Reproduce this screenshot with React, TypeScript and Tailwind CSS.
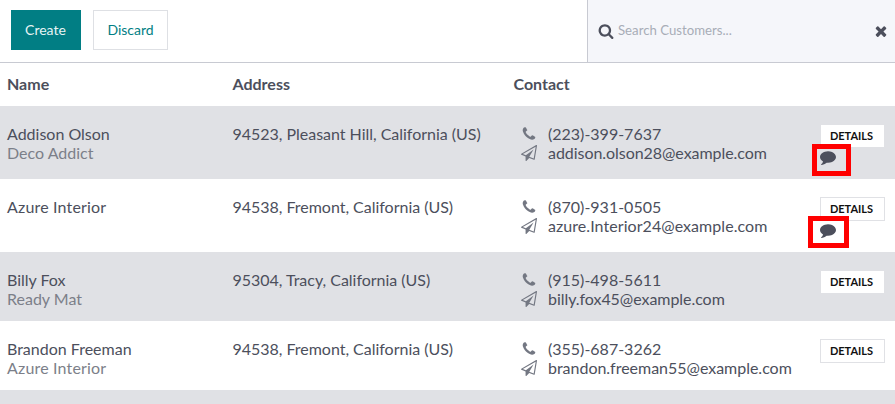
type IconProps = { path: string; className?: string };

const Icon = ({ path, className = "" }: IconProps) => (
  <svg viewBox="0 0 1792 1792" fill="currentColor" className={`size-4 shrink-0 ${className}`} aria-hidden="true">
    <path d={path} />
  </svg>
);

const phone = "M1600 1240q0 27-10 70.5t-21 68.5q-21 50-122 106-94 51-186 51-27 0-53-3.5t-57.5-12.5-47-14.5-55.5-20.5-49-18q-98-35-175-83-127-79-264-216t-216-264q-48-77-83-175-3-9-18-49t-20.5-55.5-14.5-47-12.5-57.5-3.5-53q0-92 51-186 56-101 106-122 25-11 68.5-21t70.5-10q14 0 21 3 18 6 53 76 11 19 30 54t35 63.5 31 53.5q3 4 17.5 25t21.5 35.5 7 28.5q0 20-28.5 50t-62 55-62 53-28.5 46q0 9 5 22.5t8.5 20.5 14 24 11.5 19q76 137 174 235t235 174q2 1 19 11.5t24 14 20.5 8.5 22.5 5q18 0 46-28.5t53-62 55-62 50-28.5q14 0 28.5 7t35.5 21.5 25 17.5q25 15 53.5 31t63.5 35 54 30q70 35 76 53 3 7 3 21z";
const plane = "M1764 11q33 24 27 64l-256 1536q-5 29-32 45-14 8-31 8-11 0-24-5l-527-215-298 327q-18 21-47 21-14 0-23-4-19-7-30-23.5t-11-36.5v-452l-472-193q-37-14-40-55-3-39 32-59l1664-960q35-21 68 2zm-342 1499l221-1323-1434 827 336 137 863-639-478 797z";
const search = "M1216 832q0-185-131.5-316.5t-316.5-131.5-316.5 131.5-131.5 316.5 131.5 316.5 316.5 131.5 316.5-131.5 131.5-316.5zm512 832q0 52-38 90t-90 38q-54 0-90-38l-343-342q-179 124-399 124-143 0-273.5-55.5t-225-150-150-225-55.5-273.5 55.5-273.5 150-225 225-150 273.5-55.5 273.5 55.5 225 150 150 225 55.5 273.5q0 220-124 399l343 343q37 37 37 90z";
const times = "M1490 1322q0 40-28 68l-136 136q-28 28-68 28t-68-28l-294-294-294 294q-28 28-68 28t-68-28l-136-136q-28-28-28-68t28-68l294-294-294-294q-28-28-28-68t28-68l136-136q28-28 68-28t68 28l294 294 294-294q28-28 68-28t68 28l136 136q28 28 28 68t-28 68l-294 294 294 294q28 28 28 68z";
const comment = "M1792 896q0 174-120 321.5t-326 233-450 85.5q-70 0-145-8-198 175-460 242-49 14-114 22-17 2-30.5-9t-17.5-29v-1q-3-4-.5-12t2-10 4.5-9.5l6-9 7-8.5 8-9q7-8 31-34.5t34.5-38 31-39.5 32.5-51 27-59 26-76q-157-89-247.5-220t-90.5-281q0-130 71-248.5t191-204.5 286-136.5 348-50.5q244 0 450 85.5t326 233 120 321.5z";

const rows = [
  { name: "Addison Olson", company: "Deco Addict", address: "94523, Pleasant Hill, California (US)", phone: "(223)-399-7637", email: "addison.olson28@example.com", h: "h-[73px]", box: "left-[812px] top-[38px] w-[39px]", track: "tracking-[-0.05px]" },
  { name: "Azure Interior", company: "", address: "94538, Fremont, California (US)", phone: "(870)-931-0505", email: "azure.Interior24@example.com", h: "h-[73px]", box: "left-[808px] top-[37px] w-[41px]", track: "tracking-[0.06px]" },
  { name: "Billy Fox", company: "Ready Mat", address: "95304, Tracy, California (US)", phone: "(915)-498-5611", email: "billy.fox45@example.com", h: "h-[69px]", box: "", track: "tracking-[-0.05px]" },
  { name: "Brandon Freeman", company: "Azure Interior", address: "94538, Fremont, California (US)", phone: "(355)-687-3262", email: "brandon.freeman55@example.com", h: "h-[69px]", box: "", track: "tracking-[-0.02px]" },
];

const wide = (text: string) => (text === "Azure Interior" ? "tracking-[0.17px]" : "");

export default function App() {
  return (
    <div className="h-[404px] w-[895px] overflow-hidden bg-white font-['Lato',sans-serif] text-[16px] leading-[19px] text-[#4c4f5c]">
      <header className="flex h-[63px] border-b border-[#c8cad2]">
        <div className="flex w-[587px] gap-3 pl-[11px] pt-[10px] text-[14px]">
          <button className="h-10 w-[70px] bg-[#017e84] pb-[2px] pr-px text-[#e6f4f4]">Create</button>
          <button className="h-10 w-[75px] border border-[#dee0e4] pb-[2px] text-[#017e84]">Discard</button>
        </div>
        <div className="flex flex-1 items-center border-l border-[#c8cad2] bg-[#f5f6fa] pb-px pl-[9.5px] pr-[6.5px]">
          <Icon path={search} />
          <span className="ml-[4.5px] flex-1 pb-px text-[13.2px] text-[#a8adb7]">Search Customers...</span>
          <Icon path={times} />
        </div>
      </header>
      <div className="grid h-[43px] grid-cols-[225.5px_281px_1fr] items-center pb-[2px] pl-[7px] font-bold">
        <span>Name</span><span>Address</span><span>Contact</span>
      </div>
      {rows.map((r, i) => (
        <div key={r.name} className={`relative grid grid-cols-[225.5px_288.5px_299px_65px] pl-[7px] pt-[18px] ${r.h} ${i % 2 ? "bg-white" : "bg-[#e0e1e5]"}`}>
          <div>
            <div className={wide(r.name)}>{r.name}</div>
            <div className={`text-[#7c7f89] ${wide(r.company)}`}>{r.company}</div>
          </div>
          <div className="tracking-[-0.02px]">{r.address}</div>
          <div>
            <div className="flex items-center gap-[11px]"><Icon path={phone} className="text-[#737782]" /><span>{r.phone}</span></div>
            <div className="flex items-center gap-[11px]"><Icon path={plane} className="text-[#737782]" /><span className={r.track}>{r.email}</span></div>
          </div>
          <div>
            <button className="block h-6 w-[65px] border border-[#e0e1e5] bg-white pb-px pr-[2px] text-[11px] font-bold leading-none text-[#111]">DETAILS</button>
            {r.box && <Icon path={comment} className="-ml-[0.4px] mt-px" />}
          </div>
          {r.box && <div className={`absolute h-8 border-[5px] border-[#ff0000] ${r.box}`} />}
        </div>
      ))}
      <div className="h-4 bg-[#e0e1e5]" />
    </div>
  );
}
